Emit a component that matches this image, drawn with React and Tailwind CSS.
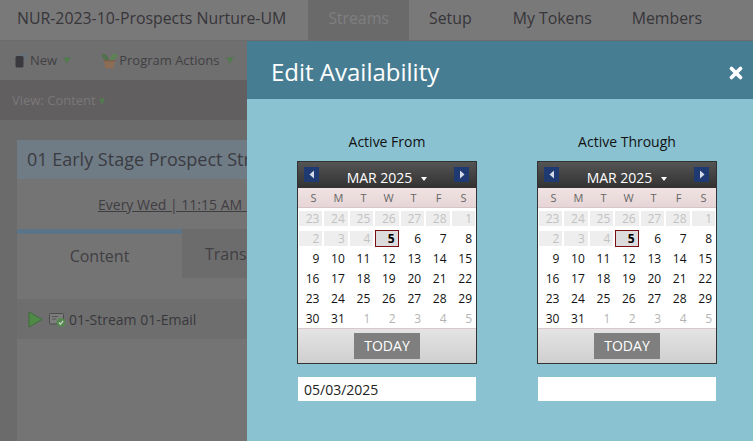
import { X } from 'lucide-react';

const FONT = "font-['Open_Sans',sans-serif]";

const WEEKDAYS = ['S', 'M', 'T', 'W', 'T', 'F', 'S'];

const WEEKS = [
  [[23, 'off'], [24, 'off'], [25, 'off'], [26, 'off'], [27, 'off'], [28, 'off'], [1, 'off']],
  [[2, 'off'], [3, 'off'], [4, 'off'], [5, 'today'], [6], [7], [8]],
  [[9], [10], [11], [12], [13], [14], [15]],
  [[16], [17], [18], [19], [20], [21], [22]],
  [[23], [24], [25], [26], [27], [28], [29]],
  [[30], [31], [1, 'next'], [2, 'next'], [3, 'next'], [4, 'next'], [5, 'next']],
];

function Caret({ className = '' }) {
  return (
    <svg width="8" height="7" viewBox="0 0 8 7" className={className}>
      <path d="M0.5 0.5 H7.5 L4 6.5 Z" fill="#4f7f4c" stroke="#5f6f5c" strokeWidth="0.6" />
    </svg>
  );
}

function NavArrow({ dir }) {
  return (
    <div className="flex h-[15px] w-[15px] items-center justify-center bg-[#1f3a72]">
      <svg width="6" height="9" viewBox="0 0 6 9">
        <path d={dir === 'left' ? 'M5 0.5 V8.5 L0.5 4.5 Z' : 'M1 0.5 V8.5 L5.5 4.5 Z'} fill="#d5dbe8" />
      </svg>
    </div>
  );
}

function DayCell({ day, kind }) {
  if (kind === 'today') {
    return (
      <div className="-my-px flex h-[17px] items-center justify-end border border-[#7d0f14] bg-[#dcdcdc] pr-[3px] font-bold text-black">
        {day}
      </div>
    );
  }
  if (kind === 'off') {
    return <div className="flex h-[15px] items-center justify-end bg-[#eeeeee] pr-[3px] text-[#c2c2c2]">{day}</div>;
  }
  if (kind === 'next') {
    return <div className="flex h-[15px] items-center justify-end pr-[3px] text-[#b4b4b4]">{day}</div>;
  }
  return <div className="flex h-[15px] items-center justify-end pr-[3px] text-[#111]">{day}</div>;
}

function Calendar() {
  return (
    <div className="h-[203px] w-[180px] border border-[#333] bg-white">
      <div className="relative flex h-[26px] items-end justify-center bg-gradient-to-b from-[#555454] to-[#333232] text-[14px] leading-[20px] text-white">
        <div className="absolute left-[6px] top-[5px]">
          <NavArrow dir="left" />
        </div>
        <span>MAR 2025</span>
        <svg width="6" height="4" viewBox="0 0 6 4" className="ml-[9px] mb-[7px]">
          <path d="M0 0 H6 L3 4 Z" fill="#fff" />
        </svg>
        <div className="absolute right-[7px] top-[5px]">
          <NavArrow dir="right" />
        </div>
      </div>
      <div className="grid h-[20px] grid-cols-7 items-center gap-x-[2px] border-b border-[#d8c4c6] bg-gradient-to-b from-[#f1e3e3] to-[#e6d5d6] pl-[4px] pr-px pt-[2px] text-center text-[11px] text-[#666]">
        {WEEKDAYS.map((d, i) => (
          <span key={i}>{d}</span>
        ))}
      </div>
      <div className="grid grid-cols-7 gap-x-[2px] gap-y-[5px] px-px pt-[3px] text-[12px] leading-[15px]">
        {WEEKS.flat().map(([day, kind], i) => (
          <DayCell key={i} day={day} kind={kind} />
        ))}
      </div>
      <div className="mt-[2px] flex h-[35px] justify-center border-t border-[#d9c9cb] bg-gradient-to-b from-[#e4e4e4] to-[#cfcfcf] pt-[4px]">
        <div className="flex h-[26px] w-[66px] items-center justify-center bg-[#7f7f7f] pb-[2px] text-[14px] text-white">TODAY</div>
      </div>
    </div>
  );
}

function DateColumn({ label, value }) {
  return (
    <div className="flex w-[180px] flex-col items-center">
      <div className="mb-[9px] text-[14px] leading-[20px] text-[#111]">{label}</div>
      <Calendar />
      <div className="mt-[13px] h-[24px] w-[178px] bg-white pl-[6px] text-[14px] leading-[26px] text-[#222]">{value}</div>
    </div>
  );
}

function BookIcon() {
  return (
    <svg width="11" height="15" viewBox="0 0 11 15" className="ml-[15px]">
      <path d="M3 3 L9 1 H10.5 V8" fill="none" stroke="#5c7487" />
      <rect x="0.5" y="3" width="8" height="11.5" rx="1.5" fill="#3a3a3e" />
    </svg>
  );
}

function PlantIcon() {
  return (
    <svg width="17" height="17" viewBox="0 0 17 17" className="ml-[30px]">
      <path d="M3 9 H14 L12.5 16.5 H4.5 Z" fill="#8c6d55" />
      <rect x="2.5" y="8" width="12" height="1.5" fill="#7b5f4a" />
      <path d="M8 8 C6.5 2 3 1 0.5 2 C1 6 4 9 8 8 Z" fill="#52704c" />
      <path d="M9 8 C10 1.5 14 1 16.5 2.5 C16 6 12.5 9 9 8 Z" fill="#5d8355" />
    </svg>
  );
}

function EmailIcon() {
  return (
    <svg width="17" height="15" viewBox="0 0 17 15" className="ml-[6px]">
      <rect x="0.5" y="1.5" width="14" height="10.5" rx="1" fill="#7d7d7d" stroke="#4c4c4c" />
      <path d="M3 4.5 H9 M3 7 H7" stroke="#555" />
      <circle cx="12" cy="10.5" r="4.5" fill="#55874f" />
      <path d="M10 10.5 L11.5 12.2 L14.2 8.8" fill="none" stroke="#c8d8c6" strokeWidth="1.2" />
    </svg>
  );
}

function BackgroundPage() {
  return (
    <div className="flex h-[441px] flex-col overflow-hidden bg-[#6c6b6c]">
      <div className="flex h-[41px] shrink-0 items-center border-b border-[#6d6c6d] bg-[#7a797a] pb-[2px] text-[15.85px] text-[#363539]">
        <div className="w-[308px] shrink-0 whitespace-nowrap pl-[17px]">NUR-2023-10-Prospects Nurture-UM</div>
        <div className="-mb-[2px] flex h-[42px] w-[101px] items-center justify-center bg-[#6b6a6b] pb-[2px] text-[#7f7e80]">Streams</div>
        <div className="ml-[20px]">Setup</div>
        <div className="ml-[41px]">My Tokens</div>
        <div className="ml-[40px]">Members</div>
      </div>
      <div className="flex h-[39px] shrink-0 items-center bg-[#706f70] text-[13px] text-[#403f43]">
        <BookIcon />
        <span className="ml-[4px]">New</span>
        <Caret className="ml-[6px]" />
        <PlantIcon />
        <span className="ml-px">Program Actions</span>
        <Caret className="ml-[7px]" />
      </div>
      <div className="flex h-[40px] shrink-0 items-center bg-[#625f61] pl-[12px] pt-[2px] text-[13px] text-[#7a7779]">
        <span>View: Content</span>
        <Caret className="ml-[2px] scale-90" />
      </div>
      <div className="mt-[20px] ml-[17px] flex-1 bg-[#757475]">
        <div className="flex h-[39px] items-center whitespace-nowrap bg-[#6f7b85] pl-[10px] text-[18px] text-[#3b3c42]">
          01 Early Stage Prospect Stream
        </div>
        <div className="flex h-[50px] items-center whitespace-pre pl-[81px] text-[14px] text-[#3f3e42] underline">
          {'Every Wed | 11:15 AM   '}
        </div>
        <div className="flex h-[49px] text-[16px] text-[#403f43]">
          <div className="flex w-[165px] items-center justify-center border-t-[5px] border-[#5c7487]">Content</div>
          <div className="flex flex-1 items-center whitespace-nowrap bg-[#6d6c6d] pl-[23px]">Transitions</div>
        </div>
        <div className="mt-[21px] flex h-[40px] items-center bg-[#6e6e6e] pl-[11px] text-[14px] text-[#38383c]">
          <svg width="15" height="17" viewBox="0 0 15 17">
            <path d="M1 1 L14 8.5 L1 16 Z" fill="#4f8a47" stroke="#3f6d3a" strokeLinejoin="round" />
          </svg>
          <EmailIcon />
          <span className="ml-[3px]">01-Stream 01-Email</span>
        </div>
      </div>
    </div>
  );
}

export default function App() {
  return (
    <div className={`relative h-[441px] w-[753px] overflow-hidden ${FONT}`}>
      <BackgroundPage />
      <div className="absolute bottom-0 left-[247px] right-0 top-[41px] bg-[#8ac2d2]">
        <div className="flex h-[58px] items-center justify-between bg-[#477d92] pl-[24px] pr-[8px] pt-[3px] text-white">
          <span className="text-[24px]">Edit Availability</span>
          <X size={18} strokeWidth={5} className="mt-[2px]" />
        </div>
        <div className="flex gap-x-[60px] pl-[50px] pt-[33px]">
          <DateColumn label="Active From" value="05/03/2025" />
          <DateColumn label="Active Through" value="" />
        </div>
      </div>
    </div>
  );
}
